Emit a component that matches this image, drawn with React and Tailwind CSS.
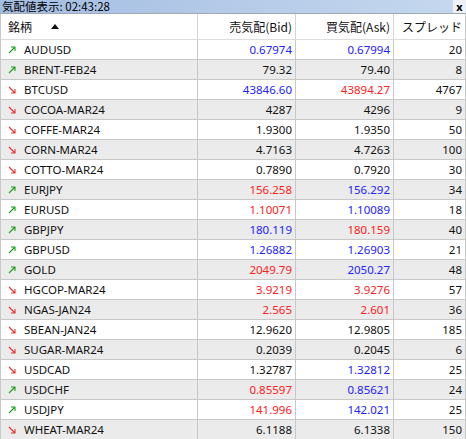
import React from "react";

const B = "text-[#2222ff]";
const R = "text-[#ff2020]";
const K = "text-[#111]";

const rows = [
  ["AUDUSD", 1, "0.67974", B, "0.67994", B, "20"],
  ["BRENT-FEB24", 1, "79.32", K, "79.40", K, "8"],
  ["BTCUSD", 0, "43846.60", B, "43894.27", R, "4767"],
  ["COCOA-MAR24", 0, "4287", K, "4296", K, "9"],
  ["COFFE-MAR24", 0, "1.9300", K, "1.9350", K, "50"],
  ["CORN-MAR24", 0, "4.7163", K, "4.7263", K, "100"],
  ["COTTO-MAR24", 0, "0.7890", K, "0.7920", K, "30"],
  ["EURJPY", 1, "156.258", R, "156.292", B, "34"],
  ["EURUSD", 1, "1.10071", R, "1.10089", B, "18"],
  ["GBPJPY", 1, "180.119", B, "180.159", R, "40"],
  ["GBPUSD", 1, "1.26882", B, "1.26903", B, "21"],
  ["GOLD", 1, "2049.79", R, "2050.27", B, "48"],
  ["HGCOP-MAR24", 0, "3.9219", R, "3.9276", R, "57"],
  ["NGAS-JAN24", 0, "2.565", R, "2.601", R, "36"],
  ["SBEAN-JAN24", 0, "12.9620", K, "12.9805", K, "185"],
  ["SUGAR-MAR24", 0, "0.2039", K, "0.2045", K, "6"],
  ["USDCAD", 0, "1.32787", K, "1.32812", B, "25"],
  ["USDCHF", 1, "0.85597", R, "0.85621", B, "24"],
  ["USDJPY", 1, "141.996", R, "142.021", B, "25"],
  ["WHEAT-MAR24", 0, "6.1188", K, "6.1338", K, "150"],
];

function Arrow({ up }) {
  if (up) {
    return (
      <svg width="8" height="8" viewBox="0 0 8 8" className="shrink-0">
        <path d="M1 7 L7 1 M3 1 H7 V5" stroke="#1aa01a" strokeWidth="1.1" fill="none" />
      </svg>
    );
  }
  return (
    <svg width="8" height="8" viewBox="0 0 8 8" className="shrink-0">
      <path d="M1 1 L7 7 M7 3 V7 H3" stroke="#e83030" strokeWidth="1.1" fill="none" />
    </svg>
  );
}

const font = { fontFamily: '"Noto Sans", "Noto Sans CJK JP", sans-serif' };
const jp = { fontFamily: '"Noto Sans CJK JP", sans-serif' };

export default function App() {
  return (
    <div className="w-[466px] h-[439px] overflow-hidden bg-white text-[11.5px] text-[#111]" style={font}>
      <div className="h-[14px] flex items-center bg-gradient-to-r from-[#a3bde1] to-[#c6d8ef] border-b border-[#a0a8b4]">
        <div className="flex-1 pl-[2px] leading-[13px] text-[11.5px] whitespace-nowrap text-black" style={jp}>
          気配値表示: 02:43:28
        </div>
        <div className="w-[13px] h-full bg-[#edf1f6] flex items-center justify-center text-[11px] font-bold leading-none text-black">x</div>
      </div>
      <div className="border-l border-r border-[#c8c8c8]">
        <div className="h-[26px] grid grid-cols-[197px_98px_98px_1fr] border-b border-[#dcdcdc] text-[12px]" style={jp}>
          <div className="flex items-center pl-[7px] border-r border-[#d4d4d4]">
            <span>銘柄</span>
            <svg width="8" height="5" viewBox="0 0 8 5" className="ml-[19px]">
              <path d="M0 5 L4 0 L8 5 Z" fill="#111" />
            </svg>
          </div>
          <div className="flex items-center justify-end pr-[3px] border-r border-[#d4d4d4]">売気配(Bid)</div>
          <div className="flex items-center justify-end pr-[3px] border-r border-[#d4d4d4]">買気配(Ask)</div>
          <div className="flex items-center justify-end pr-[3px]">スプレッド</div>
        </div>
        {rows.map((r, i) => (
          <div
            key={r[0]}
            className={`h-[20px] grid grid-cols-[197px_98px_98px_1fr] border-b border-[#c8c8c8] ${i % 2 === 1 ? "bg-[#ebebeb]" : "bg-white"}`}
          >
            <div className="flex items-center pl-[7px] gap-[8px] border-r border-[#c8c8c8]">
              <Arrow up={r[1] === 1} />
              <span>{r[0]}</span>
            </div>
            <div className={`flex items-center justify-end pr-[3px] border-r border-[#c8c8c8] ${r[3]}`}>{r[2]}</div>
            <div className={`flex items-center justify-end pr-[3px] border-r border-[#c8c8c8] ${r[5]}`}>{r[4]}</div>
            <div className="flex items-center justify-end pr-[3px]">{r[6]}</div>
          </div>
        ))}
      </div>
    </div>
  );
}
